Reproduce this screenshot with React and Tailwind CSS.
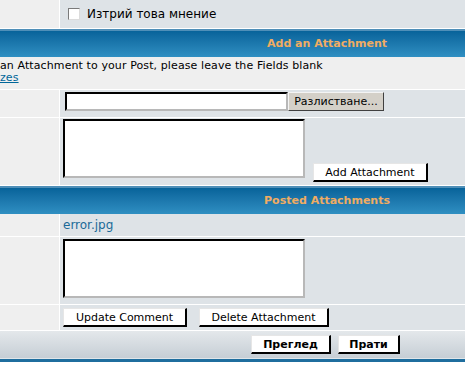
const font = { fontFamily: '"DejaVu Sans", Verdana, sans-serif' }

const Header = ({ children, pr }) => (
    <div className="h-[28px] border-t-2 border-[#4f8fb8] bg-gradient-to-b from-[#07639a] to-[#2f8fc2] flex items-center justify-end">
        <span className={`text-[11px] font-bold text-[#f0ac62] ${pr}`}>{children}</span>
    </div>
)

const Row = ({ h, children, className = '' }) => (
    <div className={`grid grid-cols-[59px_1fr] gap-x-px border-b border-white ${h}`}>
        <div className="bg-[#efefef]"></div>
        <div className={`bg-[#dee3e7] px-[3px] ${className}`}>{children}</div>
    </div>
)

const Btn = ({ children, className = '' }) => (
    <button className={`bg-white border border-t-[#e6e6e6] border-l-[#e6e6e6] border-r-2 border-b-2 border-r-black border-b-black text-[11px] text-black leading-none ${className}`}>
        {children}
    </button>
)

const Field = ({ className = '' }) => (
    <div className={`bg-white border-2 border-t-black border-l-black border-r-[#b8b8b8] border-b-[#b8b8b8] ${className}`}></div>
)

export default function App() {
    return (
        <div className="w-[465px] h-[372px] bg-white overflow-hidden text-black" style={font}>
            <Row h="h-[29px]" className="flex items-center pl-[8px]">
                <span className="w-[12px] h-[12px] bg-white border border-t-[#7a7a7a] border-l-[#7a7a7a] border-r-[#dcdcdc] border-b-[#dcdcdc]"></span>
                <span className="ml-[7px] text-[12px] leading-none">Изтрий това мнение</span>
            </Row>
            <Header pr="pr-[78px]">Add an Attachment</Header>
            <div className="h-[33px] bg-[#efefef] border-b border-white text-[11px] leading-[12px] pt-[3px] tracking-[0.1px]">
                <div>an Attachment to your Post, please leave the Fields blank</div>
                <div className="text-[#006699] underline">zes</div>
            </div>
            <Row h="h-[28px]" className="flex items-start pt-[2px] pl-[5px]">
                <Field className="w-[223px] h-[19px]" />
                <button className="w-[96px] h-[19px] bg-[#d4d0c8] border border-t-[#f4f4f4] border-l-[#f4f4f4] border-r-[#404040] border-b-[#404040] text-[11px] leading-none">Разлистване...</button>
            </Row>
            <Row h="h-[68px]" className="flex items-start pt-[1px]">
                <Field className="w-[242px] h-[59px]" />
                <Btn className="ml-[8px] mt-[44px] w-[115px] h-[19px]">Add Attachment</Btn>
            </Row>
            <Header pr="pr-[75px]">Posted Attachments</Header>
            <Row h="h-[23px]" className="flex items-center">
                <span className="text-[12px] text-[#1a6a98] leading-none">error.jpg</span>
            </Row>
            <Row h="h-[68px]" className="flex items-start pt-[2px]">
                <Field className="w-[242px] h-[59px]" />
            </Row>
            <Row h="h-[26px]" className="flex items-start pt-[3px]">
                <Btn className="w-[124px] h-[19px]">Update Comment</Btn>
                <Btn className="ml-[12px] w-[130px] h-[19px]">Delete Attachment</Btn>
            </Row>
            <div className="h-[27px] bg-gradient-to-b from-[#e4e8eb] to-[#c6ced5] flex items-center pl-[251px]">
                <Btn className="w-[80px] h-[19px] font-bold">Преглед</Btn>
                <Btn className="ml-[7px] w-[62px] h-[19px] font-bold">Прати</Btn>
            </div>
            <div className="h-[1px] bg-[#e0e6ea]"></div>
            <div className="h-[3px] bg-[#1f6e9e]"></div>
        </div>
    )
}
